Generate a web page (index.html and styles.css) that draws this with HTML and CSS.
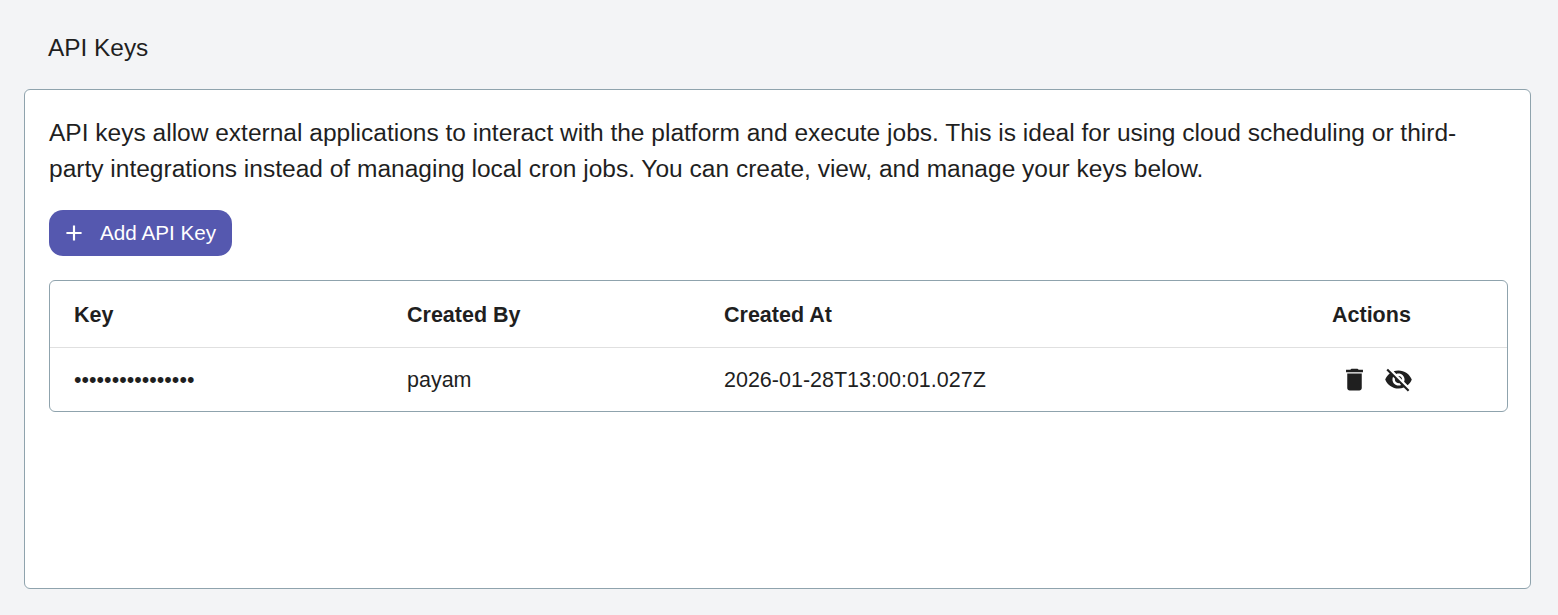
FILE: index.html
```html
<!DOCTYPE html>
<html lang="en">
<head>
  <meta charset="UTF-8">
  <meta name="viewport" content="width=device-width, initial-scale=1.0">
  <title>API Keys</title>
  <link rel="stylesheet" href="styles.css">
</head>
<body>
  <h1 class="page-title">API Keys</h1>

  <div class="panel">
    <p class="intro">API keys allow external applications to interact with the platform and execute jobs. This is ideal for using cloud scheduling or third-party integrations instead of managing local cron jobs. You can create, view, and manage your keys below.</p>

    <button class="add-btn" type="button">
      <svg class="add-icon" viewBox="0 0 24 24"><path d="M19 13h-6v6h-2v-6H5v-2h6V5h2v6h6v2z"/></svg>
      Add API Key
    </button>

    <div class="table-wrap">
      <table class="keys-table">
        <thead>
          <tr>
            <th class="col-key">Key</th>
            <th class="col-by">Created By</th>
            <th class="col-at">Created At</th>
            <th>Actions</th>
          </tr>
        </thead>
        <tbody>
          <tr>
            <td class="masked">••••••••••••••••</td>
            <td>payam</td>
            <td>2026-01-28T13:00:01.027Z</td>
            <td>
              <div class="actions">
                <svg class="action-icon" viewBox="0 0 24 24"><path d="M6 19c0 1.1.9 2 2 2h8c1.1 0 2-.9 2-2V7H6v12zM19 4h-3.5l-1-1h-5l-1 1H5v2h14V4z"/></svg>
                <svg class="action-icon" viewBox="0 0 24 24"><path d="M12 7c2.76 0 5 2.24 5 5 0 .65-.13 1.26-.36 1.83l2.92 2.92c1.51-1.26 2.7-2.89 3.43-4.75-1.73-4.39-6-7.5-11-7.5-1.4 0-2.74.25-3.98.7l2.16 2.16C10.74 7.13 11.35 7 12 7zM2 4.27l2.28 2.28.46.46C3.08 8.3 1.78 10.02 1 12c1.73 4.39 6 7.5 11 7.5 1.55 0 3.03-.3 4.38-.84l.42.42L19.73 22 21 20.73 3.27 3 2 4.27zM7.53 9.8l1.55 1.55c-.05.21-.08.43-.08.65 0 1.66 1.34 3 3 3 .22 0 .44-.03.65-.08l1.55 1.55c-.67.33-1.41.53-2.2.53-2.76 0-5-2.24-5-5 0-.79.2-1.53.53-2.2zm4.31-.78l3.15 3.15.02-.16c0-1.66-1.34-3-3-3l-.17.01z"/></svg>
              </div>
            </td>
          </tr>
        </tbody>
      </table>
    </div>
  </div>
</body>
</html>
```

FILE: styles.css
```css
body {
  font-family: "Liberation Sans", Arial, sans-serif;
  margin: 0;
  padding: 0 27px 26px 24px;
  background: #f3f4f6;
  color: #1f1f1f;
}

.page-title {
  margin: 0;
  padding: 33px 24px 27px;
  font-size: 24.4px;
  font-weight: 400;
  line-height: 29px;
}

.panel {
  box-sizing: border-box;
  height: 500px;
  background: #fff;
  border: 1px solid #8fa3ad;
  border-radius: 6px;
  padding: 25px 22px 24px 24px;
}

.intro {
  margin: 0 0 23px;
  font-size: 24.52px;
  line-height: 36px;
}

.add-btn {
  display: flex;
  align-items: center;
  height: 46px;
  width: 183px;
  padding: 0 0 0 12px;
  gap: 13px;
  background: #5558af;
  color: #fff;
  border: none;
  border-radius: 14px;
  font-family: inherit;
  font-size: 20.7px;
  white-space: nowrap;
}

.add-icon {
  width: 26px;
  height: 26px;
  fill: #fff;
}

.table-wrap {
  margin-top: 24px;
  border: 1px solid #8fa3ad;
  border-radius: 6px;
}

.keys-table {
  width: 100%;
  border-collapse: collapse;
  table-layout: fixed;
  font-size: 21.5px;
}

.keys-table th {
  box-sizing: border-box;
  height: 66px;
  padding: 3px 0 0 24px;
  text-align: left;
  font-weight: 700;
  border-bottom: 1px solid #e0e0e0;
}

.keys-table td {
  box-sizing: border-box;
  height: 64px;
  padding: 2px 0 0 24px;
}

.col-key {
  width: 333px;
}

.col-by {
  width: 317px;
}

.col-at {
  width: 608px;
}

.actions {
  display: flex;
  gap: 15px;
  align-items: center;
  padding: 0 0 2px 8px;
}

.action-icon {
  width: 29px;
  height: 29px;
  fill: #1f1f1f;
}
```
